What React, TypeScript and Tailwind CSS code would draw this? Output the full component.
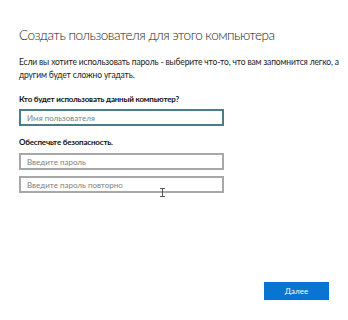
import React from "react";

export default function App() {
  const font = { fontFamily: 'Lato, "Noto Sans", sans-serif' };
  return (
    <div className="w-[348px] h-[320px] bg-white relative overflow-hidden text-black" style={font}>
      <div className="flex flex-col pl-[19px] pr-[10px] pt-[26px]">
        <h1 className="text-[13.5px] leading-[18px] font-light tracking-[-0.5px] text-[#1a1a1a] whitespace-nowrap">
          Создать пользователя для этого компьютера
        </h1>
        <p className="mt-[12px] text-[8.5px] leading-[13px] tracking-[-0.15px] text-[#222] whitespace-nowrap">
          Если вы хотите использовать пароль - выберите что-то, что вам запомнится легко, а
          <br />
          другим будет сложно угадать.
        </p>
        <div className="mt-[11px] text-[8px] leading-[12px] font-bold tracking-[-0.2px] text-[#111] whitespace-nowrap">
          Кто будет использовать данный компьютер?
        </div>
        <div className="mt-[4px] w-[205px] h-[17px] border-2 border-[#4a7f89] flex items-center pl-[6px] text-[8px] text-[#808080]">
          Имя пользователя
        </div>
        <div className="mt-[10px] text-[8px] leading-[12px] font-bold tracking-[-0.2px] text-[#111]">
          Обеспечьте безопасность.
        </div>
        <div className="mt-[5px] w-[205px] h-[17px] border-2 border-[#a8a8a8] flex items-center pl-[6px] text-[8px] text-[#808080]">
          Введите пароль
        </div>
        <div className="mt-[6px] w-[205px] h-[17px] border-2 border-[#a8a8a8] flex items-center pl-[6px] text-[8px] text-[#808080]">
          Введите пароль повторно
        </div>
        <div className="flex justify-end mt-[89px] pr-[9px]">
          <div className="w-[65px] h-[18px] bg-[#0a74d2] flex items-center justify-center text-[8px] text-white">
            Далее
          </div>
        </div>
      </div>
      <div className="absolute left-[159px] top-[188px] w-[6px] h-[9px] flex flex-col items-center">
        <div className="w-[5px] h-px bg-[#555]" />
        <div className="w-px flex-1 bg-[#555]" />
        <div className="w-[5px] h-px bg-[#555]" />
      </div>
    </div>
  );
}
